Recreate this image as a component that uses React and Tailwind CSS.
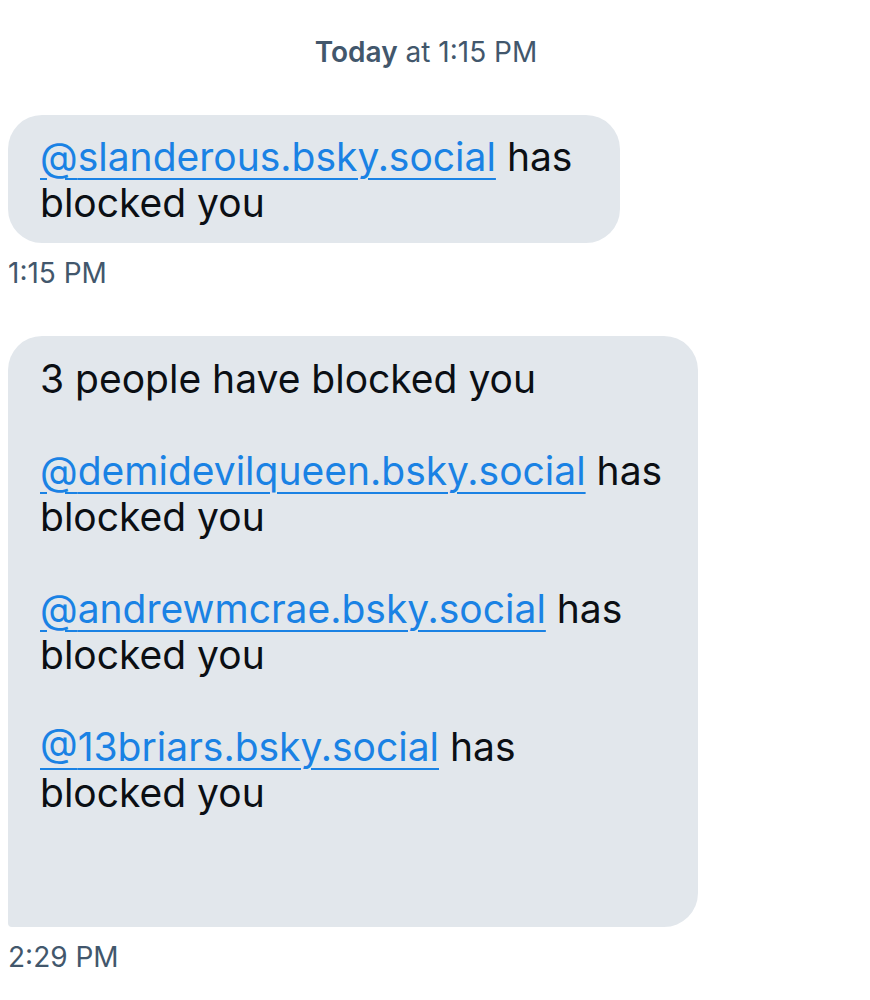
import React from 'react';

const link = 'text-[#1a82e4] underline decoration-[2px] underline-offset-[7px]';

function Blocked({ handle }) {
  return (
    <p>
      <span className={link}>@{handle}</span> has blocked you
    </p>
  );
}

export default function App() {
  return (
    <div className="w-[870px] h-[1000px] bg-white font-['Inter',sans-serif] text-[#0b0f14] overflow-hidden">
      <div className="pt-[36px] pr-[18px] text-center text-[28px] leading-[32px] text-[#42576c]">
        <span className="font-semibold">Today</span> at 1:15 PM
      </div>

      <div className="mt-[47px] pl-2">
        <div className="w-[612px] rounded-[34px] bg-[#e2e7ec] pl-[32px] pr-[28px] pt-[19px] pb-[17px] text-[39px] leading-[46px]">
          <Blocked handle="slanderous.bsky.social" />
        </div>
        <div className="mt-[14px] text-[28px] leading-[32px] text-[#42576c]">1:15 PM</div>
      </div>

      <div className="mt-[47px] pl-2">
        <div className="w-[690px] rounded-[34px] rounded-bl-[4px] bg-[#e2e7ec] pl-[32px] pr-[33px] pt-[20px] pb-[111px] text-[39px] leading-[46px] flex flex-col gap-[46px]">
          <p>3 people have blocked you</p>
          <Blocked handle="demidevilqueen.bsky.social" />
          <Blocked handle="andrewmcrae.bsky.social" />
          <Blocked handle="13briars.bsky.social" />
        </div>
        <div className="mt-[14px] text-[28px] leading-[32px] text-[#42576c]">2:29 PM</div>
      </div>
    </div>
  );
}
